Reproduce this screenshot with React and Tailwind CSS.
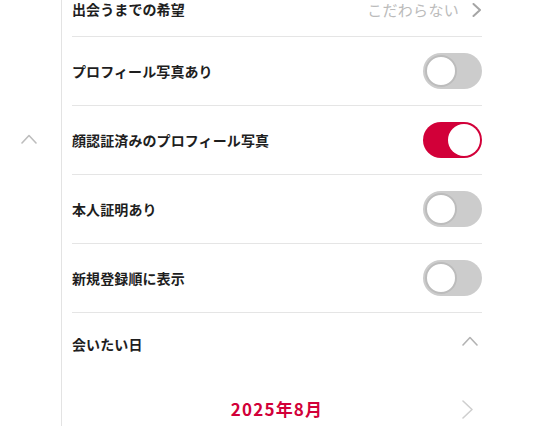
// Search filter panel: toggles list + date picker header

function Chevron({ dir = "right", className = "" }) {
  const paths = {
    right: "M1 1 L10 9.5 L1 18",
    up: "M1 9 L8 1.5 L15 9",
    small: "M1.5 1 L8 7 L1.5 13",
  };
  const size = dir === "up" ? { w: 16, h: 10 } : dir === "small" ? { w: 10, h: 14 } : { w: 11, h: 19 };
  return (
    <svg
      width={size.w}
      height={size.h}
      viewBox={`0 0 ${size.w} ${size.h}`}
      fill="none"
      className={className}
    >
      <path d={paths[dir]} stroke="currentColor" strokeWidth={dir === "small" ? 2 : 1.6} strokeLinecap="round" strokeLinejoin="round" />
    </svg>
  );
}

function Toggle({ on }) {
  return (
    <div
      className={
        on
          ? "w-[59px] h-[36px] rounded-full bg-[#d20039] p-[2px] flex justify-end"
          : "w-[59px] h-[36px] rounded-full bg-[#cccccc] p-[2px] flex justify-start"
      }
    >
      <div
        className={
          on
            ? "w-[32px] h-[32px] rounded-full bg-white"
            : "w-[32px] h-[32px] rounded-full bg-white border-[2px] border-[#bcbcbc]"
        }
      />
    </div>
  );
}

const toggles = [
  { label: "プロフィール写真あり", on: false },
  { label: "顔認証済みのプロフィール写真", on: true },
  { label: "本人証明あり", on: false },
  { label: "新規登録順に表示", on: false },
];

export default function App() {
  return (
    <div className="flex w-[560px] h-[426px] overflow-hidden bg-white font-['Noto_Sans_CJK_JP','Noto_Sans',sans-serif] text-[#1e1e1e]">
      {/* left rail */}
      <aside className="w-[62px] shrink-0 border-r border-[#e3e3e3] flex justify-center pt-[134px]">
        <Chevron dir="up" className="text-[#bdbdbd] ml-[-4px]" />
      </aside>

      <main className="w-[410px] ml-[10px]">
        <div className="h-[37px] border-b border-[#e5e5e5] flex justify-between items-start">
          <span className="text-[14px] leading-[19px] font-bold tracking-[0.1px]">出会うまでの希望</span>
          <div className="flex items-start gap-[13px]">
            <span className="text-[15px] leading-[19px] text-[#bbbbbb] tracking-[0.3px]">こだわらない</span>
            <Chevron dir="small" className="text-[#a5a5a5] mt-[3px]" />
          </div>
        </div>

        {toggles.map((t) => (
          <div key={t.label} className="h-[69px] border-b border-[#e5e5e5] flex justify-between items-center">
            <span className="text-[14px] font-bold tracking-[0.1px]">{t.label}</span>
            <Toggle on={t.on} />
          </div>
        ))}

        <div className="h-[62px] flex justify-between items-center">
          <span className="text-[14px] font-bold tracking-[0.1px]">会いたい日</span>
          <Chevron dir="up" className="text-[#b3b3b3] mr-[4px] mb-[6px]" />
        </div>

        <div className="h-[68px] grid grid-cols-[1fr_auto_1fr] items-center">
          <span />
          <span className="text-[17px] font-bold text-[#d20039] tracking-[1.2px]">2025年8月</span>
          <Chevron dir="right" className="text-[#cfcfcf] justify-self-end mr-[9px]" />
        </div>
      </main>
    </div>
  );
}
